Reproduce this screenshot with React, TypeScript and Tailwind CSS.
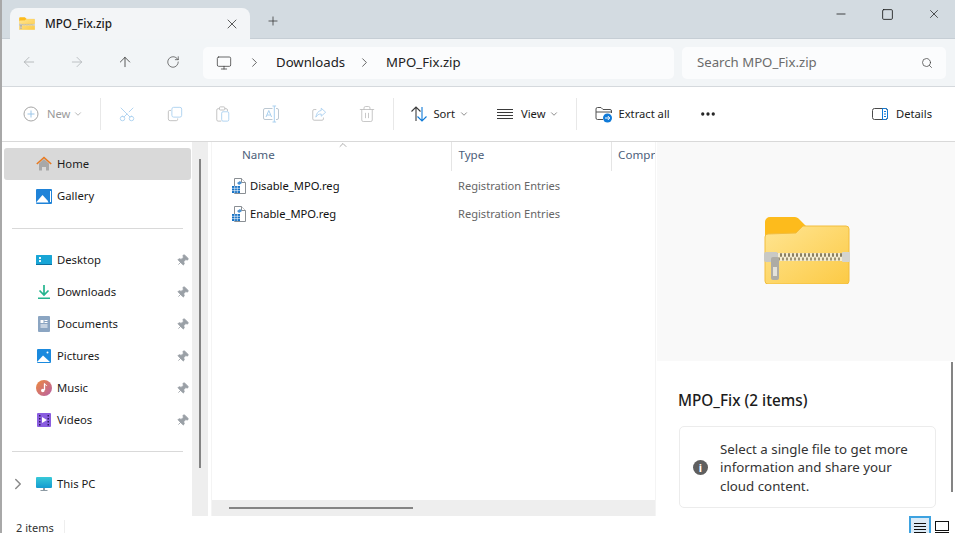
import React from 'react';
import { ArrowLeft, ArrowRight, ArrowUp, RotateCw, Monitor, ChevronRight, ChevronDown, ChevronUp, Search, X, Plus, Minus, Square, Scissors, Trash2, Ellipsis, Pin } from 'lucide-react';

const ZipFolder: React.FC<{ className?: string; gradId: string }> = ({ className, gradId }) => (
    <svg viewBox="0 0 86 68" className={className}>
        <defs>
            <linearGradient id={gradId} x1="0" y1="0" x2="1" y2="1">
                <stop offset="0" stopColor="#ffe592" />
                <stop offset="1" stopColor="#fcca45" />
            </linearGradient>
        </defs>
        <path d="M1 6a5 5 0 0 1 5-5h25a5 5 0 0 1 3.500 1.500L44 12v10H1z" fill="#fdbb1c" />
        <path d="M1 21a3 3 0 0 1 3-3l28-1 7-7h43a3 3 0 0 1 3 3v52a3 3 0 0 1-3 3H4a3 3 0 0 1-3-3z" fill={`url(#${gradId})`} stroke="#f2bd3d" strokeWidth="1" />
        <rect x="12" y="37" width="68" height="8" fill="#f4ecd0" />
        <path d="M12 39h68" stroke="#8a7f62" strokeWidth="3.500" strokeDasharray="2 2" />
        <path d="M12 43h68" stroke="#9c9274" strokeWidth="3" strokeDasharray="2 2" strokeDashoffset="2" />
        <rect x="0" y="36" width="14" height="10" rx="2" fill="#c9c9c5" />
        <rect x="78" y="36" width="8" height="10" rx="1" fill="#d4d4cf" />
        <rect x="7" y="41" width="8" height="23" rx="2" fill="#aeaca5" />
        <rect x="9" y="51" width="4" height="9" fill="#e4e2da" />
    </svg>
);

const HomeIcon = () => (
    <svg viewBox="0 0 16 16" className="w-4 h-4">
        <path d="M3 7.500 8 3l5 4.500V14a.5.5 0 0 1-.5.5H10V11H6v3.500H3.500A.5.500 0 0 1 3 14z" fill="#a8a8a8" />
        <path d="M.8 8 8 1.500 15.200 8" fill="none" stroke="#e8791f" strokeWidth="1.600" />
    </svg>
);
const GalleryIcon = () => (
    <svg viewBox="0 0 16 16" className="w-4 h-4">
        <rect x="0" y="1" width="16" height="15" rx="1" fill="#1f83d8" />
        <path d="M0 14.500 6.500 7l5 5.500 1 2z" fill="#ffffff" />
        <path d="M15 3v11H14V3z" fill="#ffffff" />
    </svg>
);
const DesktopIcon = () => (
    <svg viewBox="0 0 16 16" className="w-4 h-4">
        <path d="M0 3.500a.5.500 0 0 1 .5-.5h15a.5.500 0 0 1 .5.500V12.500H0z" fill="#18a5d6" />
        <rect x="3" y="5" width="2" height="2" fill="#e8f7fc" />
        <rect x="3" y="8" width="2" height="2" fill="#e8f7fc" />
        <rect x="0" y="12" width="16" height="1" fill="#0c6f9f" />
    </svg>
);
const DownloadIcon = () => (
    <svg viewBox="0 0 16 16" className="w-4 h-4">
        <path d="M8 1v9M3.500 6.500 8 11l4.500-4.500" fill="none" stroke="#24b58e" strokeWidth="1.700" />
        <rect x="2" y="13.500" width="12" height="1.500" fill="#24b58e" />
    </svg>
);
const DocumentsIcon = () => (
    <svg viewBox="0 0 16 16" className="w-4 h-4">
        <rect x="2" y="0" width="12" height="16" rx="1" fill="#8ba5c2" />
        <path d="M4.500 4h3v3h-3zM8.500 4h3v1h-3zM8.500 6h3v1h-3zM4.500 8.500h7v1h-7zM4.500 10.500h7v1h-7z" fill="#ffffff" />
    </svg>
);
const PicturesIcon = () => (
    <svg viewBox="0 0 16 16" className="w-4 h-4">
        <rect x="1" y="1" width="14" height="14" rx="1" fill="#1b8ade" />
        <path d="M1 14 7 7.500 14 14z" fill="#ffffff" />
        <circle cx="11.500" cy="4.500" r="1" fill="#ffffff" />
    </svg>
);
const MusicIcon = () => (
    <svg viewBox="0 0 16 16" className="w-4 h-4">
        <defs>
            <linearGradient id="music" x1="0" y1="0" x2="1" y2="1">
                <stop offset="0" stopColor="#ee8a3c" />
                <stop offset="1" stopColor="#b75fa6" />
            </linearGradient>
        </defs>
        <circle cx="8" cy="8" r="8" fill="url(#music)" />
        <path d="M8.500 3.500v6.500" stroke="#ffffff" strokeWidth="1.300" />
        <path d="M8.500 3.500c.5 1.500 2 1.500 2.500 2.500" fill="none" stroke="#ffffff" strokeWidth="1" />
        <circle cx="6.800" cy="10.500" r="1.800" fill="#ffffff" />
    </svg>
);
const VideosIcon = () => (
    <svg viewBox="0 0 16 16" className="w-4 h-4">
        <rect x="1" y="1" width="14" height="14" rx="1" fill="#8a5de0" />
        <path d="M3 3h1.500v1.500H3zM3 6h1.500v1.500H3zM3 9h1.500v1.500H3zM3 12h1.500v1.500H3zM11.500 3H13v1.500h-1.500zM11.500 6H13v1.500h-1.500zM11.500 9H13v1.500h-1.500zM11.500 12H13v1.500h-1.500z" fill="#2d1b5c" />
        <path d="M6 5v6l5-3z" fill="#ffffff" />
    </svg>
);
const ThisPcIcon = () => (
    <svg viewBox="0 0 16 16" className="w-4 h-4">
        <defs>
            <linearGradient id="pc" x1="0" y1="0" x2="0" y2="1">
                <stop offset="0" stopColor="#38c9d8" />
                <stop offset="1" stopColor="#149bd0" />
            </linearGradient>
        </defs>
        <rect x="0" y="1" width="16" height="11" rx="1" fill="url(#pc)" />
        <path d="M7 12h2v2h2.500v1h-7v-1H7z" fill="#8d9aa3" />
    </svg>
);
const RegIcon = () => (
    <svg viewBox="0 0 16 16" className="w-4 h-4">
        <path d="M3.500.5h7l4 4v11h-11z" fill="#ffffff" stroke="#8a8f94" />
        <path d="M10.500.5v4h4" fill="#ffffff" stroke="#8a8f94" />
        <path d="M6 5l3-2 2 2-3 2z" fill="#4a90d0" />
        <rect x="1" y="8" width="8" height="7" fill="#1571c4" />
        <path d="M1 10.300h8M1 12.600h8M3.700 8v7M6.300 8v7" stroke="#ffffff" strokeWidth=".6" />
    </svg>
);
const CopyIcon = () => (
    <svg viewBox="0 0 18 18" className="w-4 h-4" fill="none">
        <path d="M4.500 5H3a1.500 1.500 0 0 0-1.500 1.500v8A2 2 0 0 0 3.500 16.500h7a1.500 1.500 0 0 0 1.500-1.500v-1" stroke="#bcbcbc" />
        <rect x="5.500" y="1.500" width="11" height="11" rx="2" stroke="#a9d0ef" />
    </svg>
);
const PasteIcon = () => (
    <svg viewBox="0 0 18 18" className="w-4 h-4" fill="none">
        <path d="M5 3H3.500A1.500 1.500 0 0 0 2 4.500v11A1.500 1.500 0 0 0 3.500 17H7" stroke="#bcbcbc" />
        <path d="M11 3h1.500A1.500 1.500 0 0 1 14 4.500V6" stroke="#bcbcbc" />
        <rect x="5" y="1" width="6" height="3.500" rx="1" stroke="#bcbcbc" />
        <rect x="7.500" y="6.500" width="8" height="10.500" rx="1.500" stroke="#a9d0ef" />
    </svg>
);
const RenameIcon = () => (
    <svg viewBox="0 0 18 18" className="w-[18px] h-[18px]" fill="none" stroke="#a9d0ef" strokeWidth="1">
        <path d="M10.500 3.500H3A1.500 1.500 0 0 0 1.500 5v8A1.500 1.500 0 0 0 3 14.500h7.500" stroke="#bcc8d2" />
        <path d="M14 3.500h1A1.500 1.500 0 0 1 16.500 5v8a1.500 1.500 0 0 1-1.500 1.500h-1" stroke="#bcc8d2" />
        <path d="M12.300 1v16M10.500 1h3.600M10.500 17h3.600" />
        <path d="M4 12 6.800 5.500 9.600 12M5 10h3.600" />
    </svg>
);
const ShareIcon = () => (
    <svg viewBox="0 0 18 18" className="w-4 h-4" fill="none">
        <path d="M6 4H3.500A1.500 1.500 0 0 0 2 5.500v9A1.500 1.500 0 0 0 3.500 16h9a1.500 1.500 0 0 0 1.500-1.500V13" stroke="#bcbcbc" />
        <path d="M11.500 2.500 16.500 7l-5 4.500V9c-3 0-4.500 1-6 3.500C6 8.500 8 5.500 11.500 5z" stroke="#a9d0ef" />
    </svg>
);
const SortIcon = () => (
    <svg viewBox="0 0 18 18" className="w-[18px] h-[18px]" fill="none" strokeWidth="1.100">
        <path d="M6 16V2M1.500 6.500 6 2l4.500 4.500" stroke="#3c3c3c" />
        <path d="M12 2v14M7.500 11.500 12 16l4.500-4.500" stroke="#0f7ad8" />
    </svg>
);
const ViewIcon = () => (
    <svg viewBox="0 0 16 10" className="w-4 h-2.5" stroke="#3a3a3a" strokeWidth="1">
        <path d="M0 .5h16M0 3.500h16M0 6.500h16M0 9.500h16" />
    </svg>
);
const ExtractIcon = () => (
    <svg viewBox="0 0 18 18" className="w-[18px] h-[18px]">
        <path d="M1 13V4a1.500 1.500 0 0 1 1.500-1.500H6L8 4.500h7a1.500 1.500 0 0 1 1.500 1.500v2M1 13a1.500 1.500 0 0 0 1.500 1.500H8M1 7h15" fill="none" stroke="#505050" strokeWidth="1" />
        <circle cx="12.500" cy="13" r="4.500" fill="#0f7ad8" />
        <path d="M10 13h4.500M12.800 11l2 2-2 2" fill="none" stroke="#ffffff" strokeWidth="1" />
    </svg>
);
const DetailsIcon = () => (
    <svg viewBox="0 0 16 14" className="w-4 h-3.5" fill="none">
        <rect x=".5" y="1.500" width="15" height="11" rx="2" stroke="#4a4a4a" />
        <path d="M10.500 1.500h3a2 2 0 0 1 2 2v7a2 2 0 0 1-2 2h-3z" stroke="#0f7ad8" />
        <path d="M12 4.500h2M12 7h2M12 9.500h2" stroke="#0f7ad8" />
    </svg>
);
const SmallPlusCircle = () => (
    <svg viewBox="0 0 16 16" className="w-4 h-4" fill="none" stroke="#a6a6a6">
        <circle cx="8" cy="8" r="7" />
        <path d="M8 4.500v7M4.500 8h7" stroke="#9cc6e8" />
    </svg>
);
const PaneViewIcon = () => (
    <svg viewBox="0 0 14 17" className="w-[14px] h-[17px]" fill="none" stroke="#111111">
        <rect x=".5" y="5.500" width="13" height="9" />
        <path d="M0 16.500h14" />
    </svg>
);
const ListViewIcon = () => (
    <svg viewBox="0 0 12 15" className="w-3 h-[15px]" stroke="#111111">
        <path d="M0 5.500h12M0 8.500h12M0 11.500h12M0 14.500h12" />
    </svg>
);

const Divider = () => <div className="w-px h-8 bg-[#e8e8e8] shrink-0" />;

const NavItem: React.FC<{ icon: React.ReactNode; label: string; pinned?: boolean; active?: boolean; chevron?: boolean }> = ({ icon, label, pinned, active, chevron }) => (
    <div className={`h-8 flex items-center rounded-[3px] mr-px ${active ? 'bg-[#d9d9d9]' : ''}`}>
        <div className="w-8 shrink-0 pl-[5px] flex items-center">
            {chevron && <ChevronRight className="w-[18px] h-[18px] text-[#8a8a8a]" strokeWidth={2} />}
        </div>
        <span className="shrink-0 w-4 h-4 flex">{icon}</span>
        <span className="ml-[5px] text-[11.300px] text-[#1b1b1b] flex-1">{label}</span>
        {pinned && <Pin className="w-[13px] h-[13px] mr-[2px] rotate-45 text-[#9aa0a6] fill-[#9aa0a6]" strokeWidth={1.500} />}
    </div>
);

const FileRow: React.FC<{ name: string }> = ({ name }) => (
    <div className="h-7 flex items-center">
        <span className="ml-[19px] w-4 h-4 flex shrink-0"><RegIcon /></span>
        <span className="ml-[3px] w-[208px] text-[11.200px] text-[#111111]">{name}</span>
        <span className="text-[11.100px] text-[#666666]">Registration Entries</span>
    </div>
);

export default function App() {
    return (
        <div className="w-[955px] h-[533px] overflow-hidden flex flex-col bg-white border-l-2 border-[#a8a8a8] text-[#1b1b1b]" style={{ fontFamily: '"Noto Sans", "Open Sans", sans-serif' }}>
            {/* title bar */}
            <div className="h-[39px] shrink-0 bg-[#d3dbe1] flex items-end pl-2 shadow-[inset_0_-1px_0_#c6ced5]">
                <div className="w-[240px] h-[31px] bg-[#f3f5f7] rounded-t-lg flex items-center pl-[9px] pr-[10px]">
                    <ZipFolder gradId="tabZip" className="w-4 h-[13px] shrink-0" />
                    <span className="ml-[10px] flex-1 text-[11.700px] font-medium text-[#1b1b1b]">MPO_Fix.zip</span>
                    <X className="w-4 h-4 text-[#333333]" strokeWidth={1.200} />
                </div>
                <Plus className="w-[14px] h-[14px] ml-[16px] mb-[11px] text-[#333333]" strokeWidth={1.300} />
                <div className="flex-1" />
                <div className="self-start flex items-center h-[28px] pr-[14px]">
                    <Minus className="w-[14px] h-[14px] mr-[33px] text-[#111111]" strokeWidth={1.300} />
                    <Square className="w-[13px] h-[13px] mr-[33px] text-[#111111]" strokeWidth={1.500} />
                    <X className="w-[14px] h-[14px] text-[#111111]" strokeWidth={1.200} />
                </div>
            </div>

            {/* address bar */}
            <div className="h-[48px] shrink-0 bg-[#f2f5f7] border-b border-[#d5d9dd] flex items-center">
                <div className="w-[201px] flex items-center shrink-0 pl-[19px] pb-px">
                    <ArrowLeft className="w-4 h-4 text-[#a9adb0]" strokeWidth={1.200} />
                    <ArrowRight className="w-4 h-4 ml-[32px] text-[#b0b4b7]" strokeWidth={1.200} />
                    <ArrowUp className="w-4 h-4 ml-[32px] text-[#333333]" strokeWidth={1.200} />
                    <RotateCw className="w-[14px] h-[14px] ml-[33px] text-[#444444]" strokeWidth={1.200} />
                </div>
                <div className="w-[471px] h-8 shrink-0 bg-[#fbfcfd] rounded-[5px] flex items-center">
                    <Monitor className="w-4 h-4 ml-[13px] text-[#333333]" strokeWidth={1.100} />
                    <ChevronRight className="w-[15px] h-[15px] ml-[15px] text-[#333333]" strokeWidth={1.200} />
                    <span className="ml-[14px] text-[13.200px] text-[#222222]">Downloads</span>
                    <ChevronRight className="w-[15px] h-[15px] ml-[12px] text-[#333333]" strokeWidth={1.200} />
                    <span className="ml-[14px] text-[13.200px] text-[#222222]">MPO_Fix.zip</span>
                </div>
                <div className="w-[264px] h-8 ml-2 shrink-0 bg-[#fbfcfd] rounded-[5px] flex items-center pl-[15px] pr-[13px]">
                    <span className="flex-1 text-[13.200px] text-[#6b6b6b]">Search MPO_Fix.zip</span>
                    <Search className="w-3 h-3 text-[#444444]" strokeWidth={1.500} />
                </div>
            </div>

            {/* command bar */}
            <div className="h-[55px] shrink-0 border-b border-[#d9d9d9] flex items-center pl-[21px] pr-[23px]">
                <SmallPlusCircle />
                <span className="ml-2 text-[11.200px] text-[#9a9a9a]">New</span>
                <ChevronDown className="w-2.5 h-2.5 ml-[3px] text-[#aaaaaa]" />
                <div className="ml-[17px]"><Divider /></div>
                <Scissors className="w-[18px] h-[18px] ml-[17px] text-[#a9d0ef] -rotate-90" strokeWidth={1.200} />
                <span className="ml-[30px] w-[18px] flex justify-center"><CopyIcon /></span>
                <span className="ml-[30px] w-[18px] flex justify-center"><PasteIcon /></span>
                <span className="ml-[30px] flex"><RenameIcon /></span>
                <span className="ml-[30px] w-[18px] flex justify-center"><ShareIcon /></span>
                <Trash2 className="w-[18px] h-[18px] ml-[30px] text-[#bcbcbc]" strokeWidth={1.100} />
                <div className="ml-[17px]"><Divider /></div>
                <span className="ml-4 flex"><SortIcon /></span>
                <span className="ml-[5px] text-[11.200px]">Sort</span>
                <ChevronDown className="w-2.5 h-2.5 ml-[4px] text-[#777777]" />
                <span className="ml-[28px] flex"><ViewIcon /></span>
                <span className="ml-2 text-[11.200px]">View</span>
                <ChevronDown className="w-2.5 h-2.5 ml-[4px] text-[#777777]" />
                <div className="ml-[17px]"><Divider /></div>
                <span className="ml-[18px] flex"><ExtractIcon /></span>
                <span className="ml-[5px] text-[11.200px]">Extract all</span>
                <Ellipsis className="w-[18px] h-[18px] ml-[29px] text-[#222222]" strokeWidth={2.400} />
                <div className="flex-1" />
                <DetailsIcon />
                <span className="ml-2 text-[11.200px]">Details</span>
            </div>

            {/* main panes */}
            <div className="flex-1 min-h-0 flex">
                <div className="w-[190px] shrink-0 pt-[6px] pl-[2px] flex flex-col">
                    <NavItem icon={<HomeIcon />} label="Home" active />
                    <NavItem icon={<GalleryIcon />} label="Gallery" />
                    <div className="h-px bg-[#d9d9d9] ml-2 mr-[9px] mt-4 mb-[15px]" />
                    <NavItem icon={<DesktopIcon />} label="Desktop" pinned />
                    <NavItem icon={<DownloadIcon />} label="Downloads" pinned />
                    <NavItem icon={<DocumentsIcon />} label="Documents" pinned />
                    <NavItem icon={<PicturesIcon />} label="Pictures" pinned />
                    <NavItem icon={<MusicIcon />} label="Music" pinned />
                    <NavItem icon={<VideosIcon />} label="Videos" pinned />
                    <div className="h-px bg-[#d9d9d9] ml-2 mr-[9px] mt-[15px] mb-4" />
                    <NavItem icon={<ThisPcIcon />} label="This PC" chevron />
                </div>

                {/* nav scrollbar */}
                <div className="w-4 shrink-0 bg-[#eeeeee] pl-[7px] pt-[17px] pb-[48px] flex">
                    <div className="w-[2px] bg-[#848484]" />
                </div>

                <div className="w-[445px] shrink-0 ml-[3px] flex flex-col border-x-[1px] border-[#f4f4f4]">
                    <div className="relative h-[29px] flex items-stretch text-[11.600px] text-[#4c607a]">
                        <ChevronUp className="absolute left-[125px] -top-[3px] w-3 h-3 text-[#777777]" strokeWidth={1.200} />
                        <div className="w-[241px] pl-[30px] pb-[3px] flex items-center border-r border-[#e5e5e5]">Name</div>
                        <div className="w-[160px] pl-[6px] pb-[3px] flex items-center border-r border-[#e5e5e5]">Type</div>
                        <div className="pl-[6px] pb-[3px] w-[43px] overflow-hidden flex items-center whitespace-nowrap">Compressed</div>
                    </div>
                    <div className="pt-[1px] flex-1">
                        <FileRow name="Disable_MPO.reg" />
                        <FileRow name="Enable_MPO.reg" />
                    </div>
                    <div className="h-4 bg-[#eeeeee] pl-[17px] flex items-center">
                        <div className="w-[184px] h-[2px] bg-[#848484]" />
                    </div>
                </div>

                {/* details pane */}
                <div className="relative flex-1 min-w-0 flex flex-col ml-[1px]">
                    <div className="h-[219px] shrink-0 bg-[#f9f9f9] flex items-center justify-center pl-[2px] pb-[3px]">
                        <ZipFolder gradId="bigZip" className="w-[86px] h-[68px]" />
                    </div>
                    <div className="pt-[29px] pl-[21px] pr-[19px] flex-1">
                        <h2 className="text-[15.300px] leading-5 font-medium text-[#1b1b1b]">MPO_Fix (2 items)</h2>
                        <div className="ml-px mt-[16px] h-[82px] rounded-[5px] border border-[#ececec] flex items-center pl-[13px] pr-3">
                            <span className="w-[15px] h-[15px] shrink-0 rounded-full bg-[#5f5f5f] text-white text-[11px] leading-[15px] text-center font-bold">i</span>
                            <p className="ml-[12px] pt-px text-[13.300px] leading-[18.500px] text-[#333333]">Select a single file to get more information and share your cloud content.</p>
                        </div>
                    </div>
                    {/* pane scrollbar, overlays the content */}
                    <div className="absolute right-[2px] top-[220px] h-[130px] w-[2px] bg-[#848484]" />
                </div>
            </div>

            {/* status bar */}
            <div className="h-[17px] shrink-0 flex items-start pl-[14px] pr-[6px] overflow-hidden">
                <span className="mt-[4px] h-4 leading-4 text-[11px] text-[#333333] pr-[10px] border-r border-[#eeeeee]">2 items</span>
                <div className="flex-1" />
                <div className="w-[22px] h-[20px] bg-[#dcebf7] border-2 border-[#3da2e0] flex justify-center">
                    <ListViewIcon />
                </div>
                <div className="w-[14px] h-[17px] ml-1 flex">
                    <PaneViewIcon />
                </div>
            </div>
        </div>
    );
}
